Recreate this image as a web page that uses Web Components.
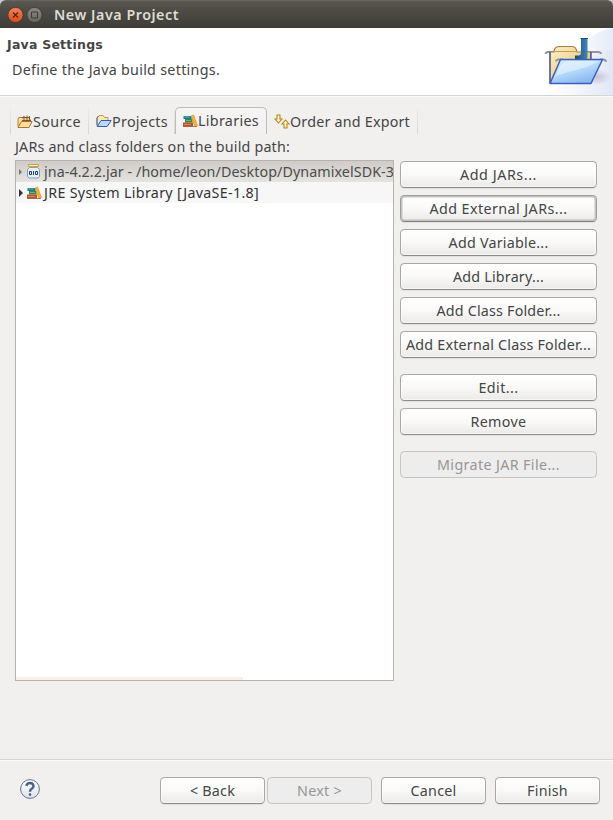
<!DOCTYPE html>
<html lang="en"><head><meta charset="utf-8"><title>New Java Project</title>
<style>html,body{margin:0;height:820px;overflow:hidden;background:#f1f0ee}</style></head><body>
<java-wizard></java-wizard>
<script>
const define=(name,html,setup)=>customElements.define(name,class extends HTMLElement{
  constructor(){super();this.attachShadow({mode:'open'}).innerHTML=html;}
  connectedCallback(){if(setup)setup(this,this.shadowRoot);}
});

// A single-line label whose tracking is adjusted to span the width given in "w".
define('fit-text',`<style>:host{display:block;white-space:pre}span{display:inline-block}</style><span><slot></slot></span>`,(el,r)=>{
  const s=r.querySelector('span'),w=+el.getAttribute('w'),n=el.textContent.length;
  s.style.letterSpacing=((w-s.getBoundingClientRect().width)/n)+'px';
});

const icons={
source:`<svg width="16" height="16" viewBox="0 0 16 16"><path d="M1 12.500V5l1-1.500h3L6 5h7v3" fill="#f7dfa6" stroke="#b57a31"/><path d="M5.500 2.500h7v5h-7z" fill="#f4d6a1"/><path d="M5 3.500h8M5 6.500h9M7 2v6M10 1.500v6M12.500 2v6" fill="none" stroke="#744b2d" stroke-width=".9"/><path d="M1 13.500 4.500 7.500h10.500l-3 6z" fill="#fbe0a4" stroke="#b87320"/></svg>`,
projects:`<svg width="16" height="16" viewBox="0 0 16 16"><path d="M1 11.500V4l2-2.500h4L8.500 3.500H12V6" fill="#fae8b6" stroke="#b69b50"/><path d="M1.200 12.500 5 6.500h10.200l-4 6z" fill="#b9d9ff" stroke="#345ab4" stroke-linejoin="round"/><path d="M1 11.500V4l1.500-2" fill="none" stroke="#476bb2"/></svg>`,
books:`<svg width="16" height="16" viewBox="0 0 16 16"><path d="M1.500 3h8v3h-8z" fill="#167d91"/><path d="M2.500 4h5" stroke="#63b5ba"/><path d="M3 6h7.500v3.500H3z" fill="#398651"/><path d="M4 7.500h5" stroke="#79b178"/><path d="M1 9.500h10v4H1z" fill="#b5552b"/><path d="M2 11.500h7" stroke="#dc8a55"/><path d="m9 3.200 2.500-1.200 4 10.500-2.500 1z" fill="#f8b13e" stroke="#d8871d" stroke-width=".6"/><path d="M1 13.500h14" stroke="#8c4c2d" stroke-width=".7"/></svg>`,
order:`<svg width="16" height="16" viewBox="0 0 16 16" fill="#fff4c6" stroke="#b9861c" stroke-width="1.100"><path d="M3 1h3v4h2L4.500 9 1 5h2z"/><path d="m11.500 6 3.500 4h-2v4h-3v-4H8z"/></svg>`,
jar:`<svg width="16" height="16" viewBox="0 0 16 16"><path d="M3.500 3.500 1.500 5.500v7l1.500 1.500h9l1.500-1.500v-7l-2-2z" fill="#e7f1fc" stroke="#7f9cc6"/><path d="M2.500 .5h10v2h-10z" fill="#ffefbb" stroke="#d3a132"/><path d="M3.500 7.500h2v3h-2zM7.500 7v4M9.500 7.500h2v3h-2z" fill="none" stroke="#263c68"/></svg>`,
banner:`<svg width="120" height="67" viewBox="0 0 120 67"><defs><linearGradient id="s"><stop stop-color="#fff"/><stop offset="1" stop-color="#dce4f6"/></linearGradient><linearGradient id="f" x2="1" y2="1"><stop stop-color="#fff2c4"/><stop offset="1" stop-color="#dcb66a"/></linearGradient><linearGradient id="b" x2=".6" y2="1"><stop stop-color="#d3efff"/><stop offset=".5" stop-color="#b9dcfb"/><stop offset="1" stop-color="#86b8f1"/></linearGradient><linearGradient id="j" x2="1"><stop stop-color="#174b7c"/><stop offset="1" stop-color="#4386b5"/></linearGradient><radialGradient id="h"><stop stop-color="#a88fa7" stop-opacity=".45"/><stop offset="1" stop-color="#a88fa7" stop-opacity="0"/></radialGradient></defs>
<path d="M78 67C78 35 88 4 120 0v67z" fill="url(#s)" opacity=".75"/><path d="M100 28q10-6 20-6v45H45q40-12 55-39" fill="url(#s)" opacity=".55"/><ellipse cx="104" cy="49" rx="14" ry="8" fill="url(#h)"/>
<path d="M52.500 26q0-2 3-2h6M94 24h11q3 0 3 2" fill="none" stroke="#94959b" stroke-width="1.800"/><path d="M57 54V24h4q0-5 5-5.500h13q4 0 5 5.500h14v24z" fill="url(#f)" stroke="#a18145" stroke-width="1.200"/><path d="M62 23.500h21" stroke="#c39d52"/><path d="M57 55V23.500M97.800 24v8" fill="none" stroke="#5060ac" stroke-width="1.500"/>
<path d="M88 10.500h6.500V28q0 6-6 7H82v-7.500h3.500q2.500 0 2.500-3z" fill="url(#j)"/><path d="M87.500 10.500h7.500" stroke="#194b7d"/><path d="M63 33.500q0-2 3-2h4M107 31.500h3q3 0 3 2.500" fill="none" stroke="#94959b" stroke-width="1.800"/><path d="M57 55.500 67.500 31.500H109.500L98 55.500z" fill="url(#b)" stroke="#3e5eba" stroke-width="1.500" stroke-linejoin="round"/><path d="M61 49c6-7 4-13 14-16h31q-10 6-21 8.500T61 49z" fill="#fff" opacity=".4"/></svg>`,
help:`<svg width="20" height="20" viewBox="0 0 20 20"><defs><linearGradient id="a" x2="0" y2="1"><stop stop-color="#fff"/><stop offset="1" stop-color="#dfe2ea"/></linearGradient></defs><circle cx="10" cy="10" r="9.400" fill="url(#a)" stroke="#617293"/><path d="M6.300 6.900Q7 4 10 4t3.500 2.900q0 1.800-1.800 2.900Q10 10.800 10 12.800" fill="none" stroke="#4c5f86" stroke-width="2.400"/><circle cx="10" cy="15.600" r="1.300" fill="#4c5f86"/></svg>`};
define('ui-icon',`<style>:host{display:block;flex:none}svg{display:block}</style><div></div>`,(el,r)=>r.querySelector('div').innerHTML=icons[el.getAttribute('name')]);

define('push-button',`<style>
:host{display:flex;box-sizing:border-box;height:27px;align-items:center;justify-content:center;border:1px solid #aaa7a4;border-bottom-color:#8e8c89;border-radius:4.500px;background:linear-gradient(#fff,#f9f9f8 50%,#ebeae8);box-shadow:inset 0 0 0 1px #fff8,0 1px 1px #0001;line-height:20px;padding-top:1px}
:host([focused]){box-shadow:inset 0 0 0 1.500px #c4c2c0,0 1px 1px #0001;border-color:#a09e9b;border-bottom-color:#858381}
:host([disabled]){background:#ededed;border-color:#c5c4c3;color:#989694;box-shadow:none}</style><fit-text></fit-text>`,(el,r)=>{const t=r.querySelector('fit-text'),n=document.createElement('fit-text');n.setAttribute('w',el.getAttribute('w'));n.textContent=el.textContent;t.replaceWith(n)});

define('title-bar',`<style>:host{display:block;height:28px;background:#c9cbd0}.bar{box-sizing:border-box;height:28px;display:flex;align-items:center;padding:0 0 0 8px;background:linear-gradient(#5a5850,#4c4b45 35%,#3e3d38);border-radius:6px 6px 0 0;border-top:1px solid #66645c;color:#dfdbd2;font-weight:600;font-size:14.300px}svg{display:block;flex:none}fit-text{margin-left:11px;line-height:20px;padding-top:1px}</style>
<div class="bar"><svg width="35" height="16" viewBox="0 0 35 16"><defs><linearGradient id="o" x2="0" y2="1"><stop stop-color="#f58259"/><stop offset="1" stop-color="#df4a16"/></linearGradient><linearGradient id="g" x2="0" y2="1"><stop stop-color="#8b8982"/><stop offset="1" stop-color="#66645e"/></linearGradient></defs><circle cx="7.500" cy="8" r="7.600" fill="url(#o)" stroke="#34332f" stroke-width=".7"/><path d="m5 5.500 5 5m0-5-5 5" stroke="#49251a" stroke-width="1.200"/><circle cx="26.500" cy="8" r="7.600" fill="url(#g)" stroke="#34332f" stroke-width=".7"/><path d="M23.500 5h6v6h-6z" fill="none" stroke="#3c3b37"/></svg><fit-text w="125">New Java Project</fit-text></div>`);

define('wizard-header',`<style>:host{display:flex;height:67px;background:#fff;border-bottom:1px solid #d6d4d1;box-shadow:0 1px #fafafa;justify-content:space-between}.copy{padding:8px 0 0 7px}.title{font:bold 12.500px/18px "DejaVu Sans",sans-serif}.desc{margin:6px 0 0 5px;line-height:20px}</style><div class="copy"><fit-text class="title" w="96">Java Settings</fit-text><fit-text class="desc" w="208">Define the Java build settings.</fit-text></div><ui-icon name="banner"></ui-icon>`);

define('tab-item',`<style>:host{display:flex;box-sizing:border-box;height:27px;align-items:center;padding:2px 0 0 7px;line-height:20px;border-right:1px solid;border-image:linear-gradient(#eee,#d7d5d3) 1}:host([active]){border:1px solid #bebcb9;border-bottom:0;border-image:none;border-radius:5px 5px 0 0;background:linear-gradient(#f6f5f4,#f1f0ee);padding:0 0 1px 6px}:host([first]){border-left:1px solid;padding-left:6px}:host([next]){padding-left:7px}</style><slot></slot>`);

define('tree-row',`<style>:host{display:flex;box-sizing:border-box;height:21px;align-items:center;padding-left:3px;line-height:20px;overflow:hidden;background:#f7f7f7}:host([selected]){background:linear-gradient(#cecbc8,#e1dfdc 80%,#e5e3e0);color:#4c4c4c}i{width:0;height:0;border:solid transparent;border-width:4px 0 4px 4px;border-left-color:#333;margin-right:3px;flex:none}:host([selected]) i{border-width:3px 0 3px 3px;border-left-color:#777;margin-right:4px}</style><i></i><slot></slot>`);

define('java-wizard',`<style>
:host{display:flex;flex-direction:column;width:613px;height:820px;font:14.300px "Noto Sans","Open Sans",sans-serif;color:#454545;background:#f1f0ee}
fit-text{flex:none}
.tabs{display:flex;margin:11px 0 0 10px;height:27px;flex:none}
.label{margin:2px 0 3px 15px;line-height:21px;height:21px}
.work{display:flex;gap:6px;margin-left:15px;height:521px}
.tree{box-sizing:border-box;width:379px;border:1px solid #b7b4b0;background:#fff;overflow:hidden;display:flex;flex-direction:column}
.tree tree-row{flex:none}.dark{color:#333}.tree fit-text{margin-left:2px}.hint{width:227px;height:3px;background:#fdeee8;margin-top:auto}
.actions{width:197px;display:flex;flex-direction:column;gap:7px;padding-top:1px}
.gap{margin-top:9px}
.foot{margin-top:78px;border-top:1px solid #d8d6d3;box-shadow:inset 0 1px #fafafa;flex:1;display:flex;align-items:flex-start;padding:17px 13px 0 20px}
.foot ui-icon{margin:2px 120px 0 0}.foot push-button{width:105px;margin-right:2px}.foot push-button.n{margin-right:9px}.foot push-button.e{margin-right:0}
</style>
<title-bar></title-bar><wizard-header></wizard-header>
<div class="tabs">
<tab-item first style="width:79px"><ui-icon name="source"></ui-icon><fit-text w="48">Source</fit-text></tab-item>
<tab-item style="width:86px"><ui-icon name="projects"></ui-icon><fit-text w="56">Projects</fit-text></tab-item>
<tab-item active style="width:92px"><ui-icon name="books"></ui-icon><fit-text w="61">Libraries</fit-text></tab-item>
<tab-item next style="width:151px"><ui-icon name="order"></ui-icon><fit-text w="120">Order and Export</fit-text></tab-item></div>
<fit-text class="label" w="275">JARs and class folders on the build path:</fit-text>
<div class="work"><div class="tree">
<tree-row selected><ui-icon name="jar"></ui-icon><fit-text w="350">jna-4.2.2.jar - /home/leon/Desktop/DynamixelSDK-3</fit-text></tree-row>
<tree-row class="dark"><ui-icon name="books"></ui-icon><fit-text w="215">JRE System Library [JavaSE-1.8]</fit-text></tree-row><div class="hint"></div></div>
<div class="actions">
<push-button w="77">Add JARs...</push-button><push-button focused w="138">Add External JARs...</push-button><push-button w="100">Add Variable...</push-button><push-button w="91">Add Library...</push-button><push-button w="124">Add Class Folder...</push-button><push-button w="185">Add External Class Folder...</push-button><push-button class="gap" w="40">Edit...</push-button><push-button w="56">Remove</push-button><push-button class="gap" disabled w="123">Migrate JAR File...</push-button></div></div>
<div class="foot"><ui-icon name="help"></ui-icon><push-button w="45">&lt; Back</push-button><push-button class="n" disabled w="45">Next &gt;</push-button><push-button class="n" w="46">Cancel</push-button><push-button class="e" w="41">Finish</push-button></div>`);
</script></body></html>
